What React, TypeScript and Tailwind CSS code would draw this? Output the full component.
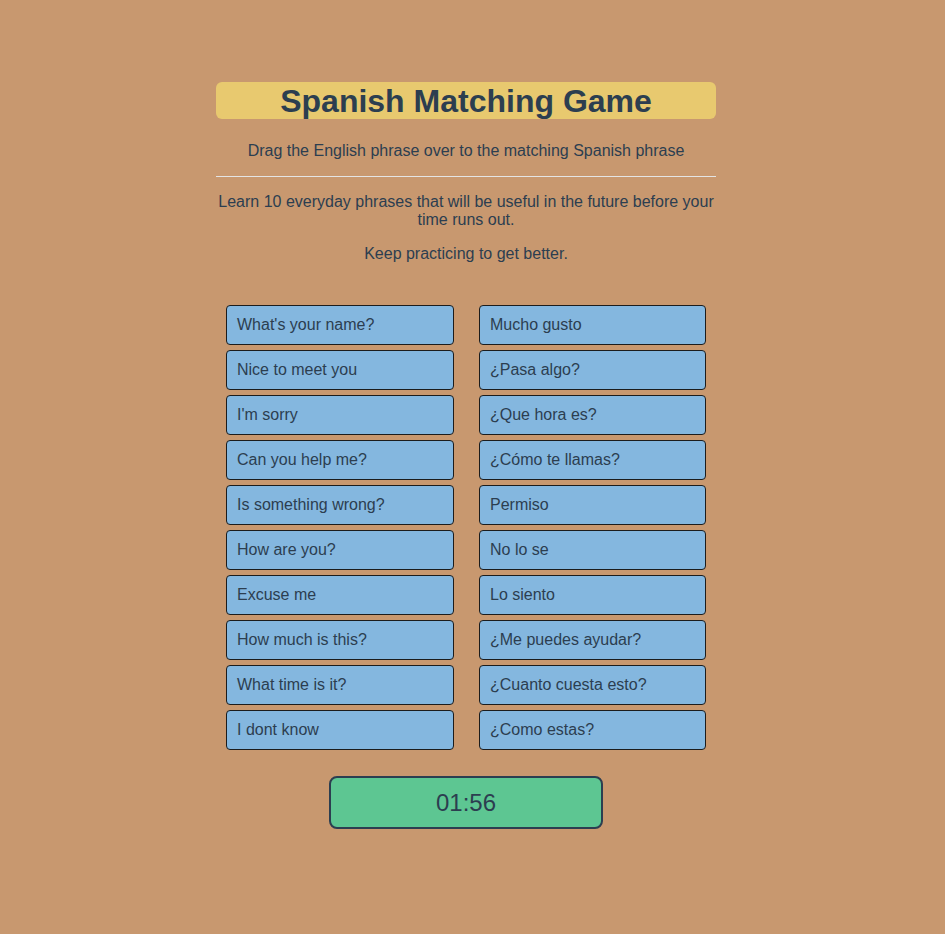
import React from 'react';

const english = [
  "What's your name?",
  'Nice to meet you',
  "I'm sorry",
  'Can you help me?',
  'Is something wrong?',
  'How are you?',
  'Excuse me',
  'How much is this?',
  'What time is it?',
  'I dont know',
];

const spanish = [
  'Mucho gusto',
  '¿Pasa algo?',
  '¿Que hora es?',
  '¿Cómo te llamas?',
  'Permiso',
  'No lo se',
  'Lo siento',
  '¿Me puedes ayudar?',
  '¿Cuanto cuesta esto?',
  '¿Como estas?',
];

function Card({ text }: { text: string }) {
  return (
    <div className="h-[40px] flex items-center pl-[10px] bg-[#84b7df] border border-[#1c1c1c] rounded-[4px] text-[16px] leading-[18px]">
      {text}
    </div>
  );
}

export default function App() {
  return (
    <div
      className="min-h-[934px] w-full bg-[#c8986f] text-[#2c3e50] pt-[82px]"
      style={{ fontFamily: '"Liberation Sans", Arial, sans-serif' }}
    >
      <div className="w-[500px] ml-[216px] flex flex-col items-center">
        <h1 className="w-full h-[37px] flex items-center justify-center bg-[#e8c96f] rounded-[6px] text-[32px] font-bold leading-none">
          Spanish Matching Game
        </h1>
        <p className="mt-[23px] text-[16px] leading-[18px] text-center">
          Drag the English phrase over to the matching Spanish phrase
        </p>
        <hr className="w-full mt-[16px] border-0 border-t border-[#e4e4e4]" />
        <p className="mt-[16px] text-[16px] leading-[18px] text-center">
          Learn 10 everyday phrases that will be useful in the future before your time runs out.
        </p>
        <p className="mt-[16px] text-[16px] leading-[18px] text-center">
          Keep practicing to get better.
        </p>

        <div className="w-full mt-[42px] px-[10px] grid grid-cols-[228px_227px] gap-x-[25px]">
          <div className="flex flex-col gap-[5px]">
            {english.map((t) => (
              <Card key={t} text={t} />
            ))}
          </div>
          <div className="flex flex-col gap-[5px]">
            {spanish.map((t) => (
              <Card key={t} text={t} />
            ))}
          </div>
        </div>

        <div className="mt-[26px] w-[274px] h-[53px] flex items-center justify-center bg-[#5dc692] border-2 border-[#2c3e50] rounded-[8px] text-[24px]">
          01:56
        </div>
      </div>
    </div>
  );
}
